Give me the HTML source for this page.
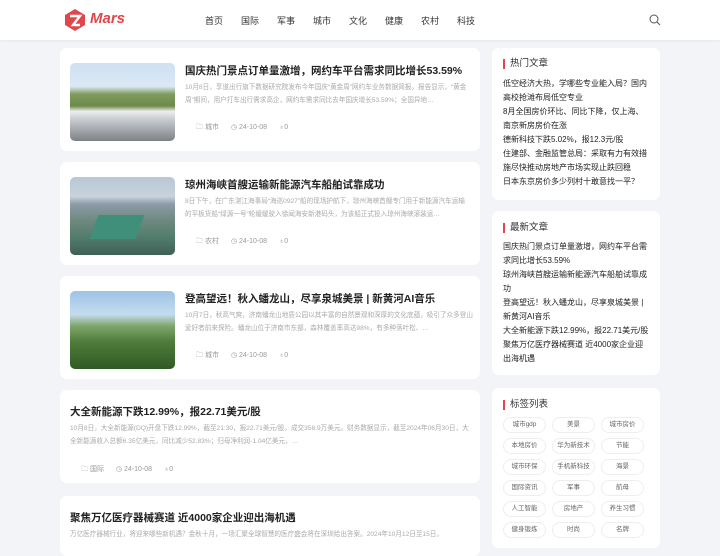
<!DOCTYPE html>
<html><head><meta charset="utf-8"><style>
*{margin:0;padding:0;box-sizing:border-box}
body{width:720px;height:540px;overflow:hidden;background:#f2f4f7;font-family:"Liberation Sans","Noto Sans CJK SC",sans-serif;color:#222;position:relative}
.hd{position:absolute;left:0;top:0;width:720px;height:40px;background:#fff;box-shadow:0 1px 4px rgba(0,0,0,.05)}
.logo{position:absolute;left:63px;top:9px}
.logo span{position:absolute;left:27px;top:1px;font:italic bold 15px "Liberation Sans",sans-serif;color:#e0474c}
.nav{position:absolute;top:14px;font-size:9px;color:#333}
.card{position:absolute;background:#fff;border-radius:7px}
.img{position:absolute;left:10px;width:105px;height:78px;border-radius:5px;overflow:hidden}
.t{position:absolute;font-size:10.5px;font-weight:bold;color:#222;white-space:nowrap}
.ex{position:absolute;font-size:6.6px;color:#aaa;line-height:13px}
.meta{position:absolute;font-size:7px;color:#999;white-space:nowrap}
.meta b{font-weight:normal;margin-right:12px}
.side{position:absolute;left:492px;width:168px;background:#fff;border-radius:7px}
.st{position:absolute;left:11px;font-size:9.5px;color:#333;padding-left:5px;border-left:2px solid #e0474c;line-height:10px}
.sl{position:absolute;left:11px;width:146px;font-size:8px;line-height:14px;color:#222}
.tag{position:absolute;width:43px;height:16px;border:1px solid #eee;border-radius:8px;font-size:6.5px;color:#666;text-align:center;line-height:14px}
</style></head><body>
<div class="hd">
<div class="logo"><svg width="24" height="22" viewBox="0 0 24 22"><path d="M12 0 L22 6 L22 16 L12 22 L2 16 L2 6Z" fill="#e0474c"/><path d="M7 7h10l-7 9h7" stroke="#fff" stroke-width="2.4" fill="none"/></svg><span>Mars</span></div>
<div class="nav" style="left:205px">首页</div><div class="nav" style="left:241px">国际</div><div class="nav" style="left:277px">军事</div><div class="nav" style="left:313px">城市</div><div class="nav" style="left:349px">文化</div><div class="nav" style="left:385px">健康</div><div class="nav" style="left:421px">农村</div><div class="nav" style="left:457px">科技</div>
<svg style="position:absolute;left:649px;top:14px" width="12" height="12" viewBox="0 0 12 12"><circle cx="5" cy="5" r="4" stroke="#555" fill="none" stroke-width="1"/><path d="M8 8l3 3" stroke="#555"/></svg>
</div>

<div class="card" style="left:60px;top:48px;width:420px;height:103px">
<div class="img" style="top:15px;background:linear-gradient(#cfe0f2 0%,#dbe8f5 30%,#7f9c5e 40%,#6b8a4a 55%,#eee 62%,#c9ccd0 72%,#7d8186 100%)"></div>
<div class="t" style="left:125px;top:15px">国庆热门景点订单量激增，网约车平台需求同比增长53.59%</div>
<div class="ex" style="left:125px;top:33px;width:285px">10月8日，享道出行旗下数据研究院发布今年国庆“黄金周”网约车业务数据简报。报告显示，“黄金周”期间，用户打车出行需求高企，网约车需求同比去年国庆增长53.59%；全国异地…</div>
<div class="meta" style="left:136px;top:74px"><b>🗀 城市</b><b>◷ 24-10-08</b><b>♁0</b></div>
</div>

<div class="card" style="left:60px;top:162px;width:420px;height:103px">
<div class="img" style="top:15px;background:linear-gradient(#b8c7d6 0%,#c8d2dc 25%,#8c9ba8 35%,#6f8a80 55%,#4f7a6a 80%,#3f5f55 100%)"><div style="position:absolute;left:24px;top:38px;width:46px;height:24px;background:#3f8f7a;transform:skewX(-20deg)"></div></div>
<div class="t" style="left:125px;top:15px">琼州海峡首艘运输新能源汽车船舶试靠成功</div>
<div class="ex" style="left:125px;top:33px;width:285px">8日下午，在广东湛江海事局“海巡0927”船的现场护航下，琼州海峡首艘专门用于新能源汽车运输的平板货船“绿源一号”轮缓缓驶入徐闻海安新港码头，为该船正式投入琼州海峡滚装运…</div>
<div class="meta" style="left:136px;top:74px"><b>🗀 农村</b><b>◷ 24-10-08</b><b>♁0</b></div>
</div>

<div class="card" style="left:60px;top:276px;width:420px;height:103px">
<div class="img" style="top:15px;background:linear-gradient(#9ec3e6 0%,#c5dcef 30%,#7fa56a 45%,#4f7d3a 65%,#2f5a25 100%)"></div>
<div class="t" style="left:125px;top:15px">登高望远！秋入蟠龙山，尽享泉城美景 | 新黄河AI音乐</div>
<div class="ex" style="left:125px;top:33px;width:290px">10月7日，秋高气爽，济南蟠龙山地质公园以其丰富的自然景观和深厚的文化底蕴，吸引了众多登山爱好者前来探险。蟠龙山位于济南市东部，森林覆盖率高达98%，有多种落叶松、…</div>
<div class="meta" style="left:136px;top:74px"><b>🗀 城市</b><b>◷ 24-10-08</b><b>♁0</b></div>
</div>

<div class="card" style="left:60px;top:390px;width:420px;height:93px">
<div class="t" style="left:10px;top:14px">大全新能源下跌12.99%，报22.71美元/股</div>
<div class="ex" style="left:10px;top:32px;width:405px">10月8日，大全新能源(DQ)开盘下跌12.99%，截至21:30，报22.71美元/股，成交358.9万美元。财务数据显示，截至2024年06月30日，大全新能源收入总额6.35亿美元，同比减少52.83%；归母净利润-1.04亿美元，…</div>
<div class="meta" style="left:21px;top:74px"><b>🗀 国际</b><b>◷ 24-10-08</b><b>♁0</b></div>
</div>

<div class="card" style="left:60px;top:496px;width:420px;height:60px">
<div class="t" style="left:10px;top:14px">聚焦万亿医疗器械赛道 近4000家企业迎出海机遇</div>
<div class="ex" style="left:10px;top:32px;width:405px;white-space:nowrap;overflow:hidden">万亿医疗器械行业，将迎来哪些新机遇？金秋十月，一场汇聚全球智慧的医疗盛会将在深圳给出答案。2024年10月12日至15日，</div>
</div>

<div class="side" style="top:48px;height:152px">
<div class="st" style="top:11px">热门文章</div>
<div class="sl" style="top:29px">低空经济大热，学哪些专业能入局？国内高校抢滩布局低空专业<br>8月全国房价环比、同比下降，仅上海、南京新房房价在涨<br>德新科技下跌5.02%，报12.3元/股<br>住建部、金融监管总局：采取有力有效措施尽快推动房地产市场实现止跌回稳<br>日本东京房价多少列村十敢意找一平？</div>
</div>

<div class="side" style="top:211px;height:164px">
<div class="st" style="top:12px">最新文章</div>
<div class="sl" style="top:29px">国庆热门景点订单量激增，网约车平台需求同比增长53.59%<br>琼州海峡首艘运输新能源汽车船舶试靠成功<br>登高望远！秋入蟠龙山，尽享泉城美景 | 新黄河AI音乐<br>大全新能源下跌12.99%，报22.71美元/股<br>聚焦万亿医疗器械赛道 近4000家企业迎出海机遇</div>
</div>

<div class="side" style="top:388px;height:160px">
<div class="st" style="top:12px">标签列表</div>
<div class="tag" style="left:11px;top:29px">城市gdp</div><div class="tag" style="left:60px;top:29px">美景</div><div class="tag" style="left:109px;top:29px">城市房价</div>
<div class="tag" style="left:11px;top:50px">本地房价</div><div class="tag" style="left:60px;top:50px">华为新技术</div><div class="tag" style="left:109px;top:50px">节能</div>
<div class="tag" style="left:11px;top:71px">城市环保</div><div class="tag" style="left:60px;top:71px">手机新科技</div><div class="tag" style="left:109px;top:71px">海景</div>
<div class="tag" style="left:11px;top:92px">国际资讯</div><div class="tag" style="left:60px;top:92px">军事</div><div class="tag" style="left:109px;top:92px">航母</div>
<div class="tag" style="left:11px;top:113px">人工智能</div><div class="tag" style="left:60px;top:113px">房地产</div><div class="tag" style="left:109px;top:113px">养生习惯</div>
<div class="tag" style="left:11px;top:134px">健身锻炼</div><div class="tag" style="left:60px;top:134px">时尚</div><div class="tag" style="left:109px;top:134px">名牌</div>
</div>
</body></html>
